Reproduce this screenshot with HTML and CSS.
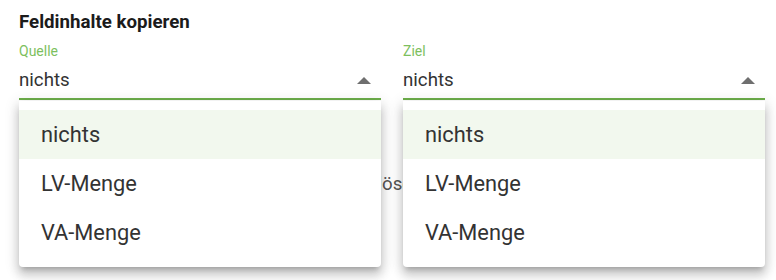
FILE: index.html
```html
<!DOCTYPE html>
<html lang="de">
<head>
<meta charset="utf-8">
<link rel="stylesheet" href="styles.css">
</head>
<body>
<div class="page">
  <h2 class="title">Feldinhalte kopieren</h2>
  <div class="fields">
    <div class="field">
      <div class="label">Quelle</div>
      <div class="control">
        <span class="value">nichts</span>
        <svg class="arrow" width="14" height="7" viewBox="0 0 14 7"><path d="M0 7 L7 0 L14 7 Z" fill="#6f6f6f"/></svg>
      </div>
      <ul class="menu">
        <li class="item active">nichts</li>
        <li class="item">LV-Menge</li>
        <li class="item">VA-Menge</li>
      </ul>
    </div>
    <div class="field">
      <div class="label">Ziel</div>
      <div class="control">
        <span class="value">nichts</span>
        <svg class="arrow" width="14" height="7" viewBox="0 0 14 7"><path d="M0 7 L7 0 L14 7 Z" fill="#6f6f6f"/></svg>
      </div>
      <ul class="menu">
        <li class="item active">nichts</li>
        <li class="item">LV-Menge</li>
        <li class="item">VA-Menge</li>
      </ul>
    </div>
  </div>
  <div class="behind"><span class="behind-lead">Quellinhalte nach dem Kopieren l</span>öschen</div>
</div>
</body>
</html>
```
FILE: styles.css
```css
html, body {
  margin: 0;
  padding: 0;
  background: #ffffff;
}
body {
  font-family: Roboto, "Liberation Sans", Arial, sans-serif;
  color: #333333;
}
.page {
  padding: 11px 0 0 19px;
  height: 269px;
}
.title {
  margin: 0;
  font-size: 18.7px;
  line-height: 22px;
  font-weight: 700;
  color: #1b1b1b;
}
.fields {
  display: flex;
  gap: 22px;
}
.field {
  position: relative;
  flex: none;
  width: 362px;
}
.label {
  margin-top: 10px;
  font-size: 14px;
  line-height: 16px;
  color: #7dbf5e;
}
.control {
  display: flex;
  align-items: center;
  justify-content: space-between;
  padding: 10px 10px 7px 0;
  border-bottom: 2px solid #6cae4a;
}
.value {
  font-size: 18.7px;
  line-height: 22px;
  color: #333333;
}
.arrow {
  display: block;
}
.menu {
  position: absolute;
  left: 0;
  right: 0;
  top: 68px;
  margin: 0;
  padding: 9px 0 10px;
  list-style: none;
  background: #ffffff;
  border-radius: 0 0 4px 4px;
  box-shadow: 0 5px 5px -3px rgba(0,0,0,.2), 0 8px 10px 1px rgba(0,0,0,.14), 0 3px 14px 2px rgba(0,0,0,.12);
  z-index: 2;
}
.item {
  height: 49px;
  display: flex;
  align-items: center;
  padding-left: 22px;
  font-size: 21.8px;
  color: #333333;
}
.item.active {
  background: #f2f8ee;
}
.behind {
  margin-top: 73px;
  font-size: 18.7px;
  line-height: 22px;
  color: #555555;
  white-space: nowrap;
}
.behind-lead {
  display: inline-block;
  width: 363px;
  text-align: right;
}
```
